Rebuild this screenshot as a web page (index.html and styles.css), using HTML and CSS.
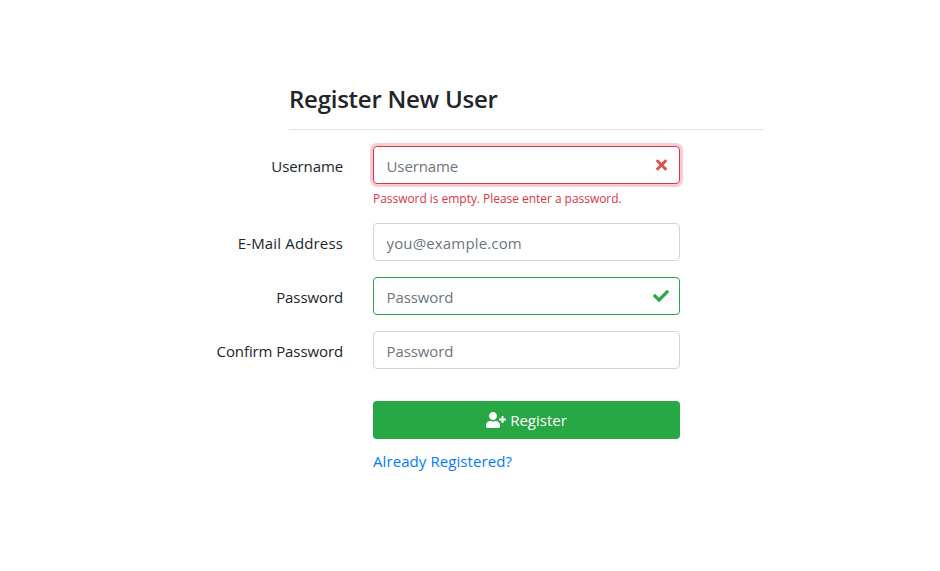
FILE: index.html
```html
<!DOCTYPE html>
<html lang="en">
<head>
    <meta charset="UTF-8">
    <meta name="viewport" content="width=device-width, initial-scale=1.0">
    <title>Register</title>
    <link rel="stylesheet" href="styles.css">
</head>
<body>

<div class="container">
    <form class="register-form">
        <h2>Register New User</h2>

        <div class="form-row has-error">
            <label for="username">Username</label>
            <div class="field">
                <div class="form-control is-invalid">
                    <input type="text" id="username" placeholder="Username">
                    <svg class="icon-times" viewBox="0 0 352 512"><path fill="currentColor" d="M242.72 256l100.07-100.07c12.28-12.28 12.28-32.19 0-44.48l-22.24-22.24c-12.28-12.28-32.19-12.28-44.48 0L176 189.28 75.93 89.21c-12.28-12.28-32.19-12.28-44.48 0L9.21 111.45c-12.28 12.28-12.28 32.19 0 44.48L109.28 256 9.21 356.07c-12.28 12.28-12.28 32.19 0 44.48l22.24 22.24c12.28 12.28 32.2 12.28 44.48 0L176 322.72l100.07 100.07c12.28 12.28 32.2 12.28 44.48 0l22.24-22.24c12.28-12.28 12.28-32.19 0-44.48L242.72 256z"/></svg>
                </div>
                <div class="feedback">Password is empty. Please enter a password.</div>
            </div>
        </div>

        <div class="form-row email-row">
            <label for="email">E-Mail Address</label>
            <div class="field">
                <div class="form-control">
                    <input type="text" id="email" placeholder="you@example.com">
                </div>
            </div>
        </div>

        <div class="form-row">
            <label for="password">Password</label>
            <div class="field">
                <div class="form-control is-valid">
                    <input type="password" id="password" placeholder="Password">
                    <svg class="icon-check" viewBox="0 0 512 512"><path fill="currentColor" d="M173.898 439.404l-166.4-166.4c-9.997-9.997-9.997-26.206 0-36.204l36.203-36.204c9.997-9.998 26.207-9.998 36.204 0L192 312.69 432.095 72.596c9.997-9.997 26.207-9.997 36.204 0l36.203 36.204c9.997 9.997 9.997 26.206 0 36.204l-294.4 294.401c-9.998 9.997-26.207 9.997-36.204-.001z"/></svg>
                </div>
            </div>
        </div>

        <div class="form-row">
            <label for="confirm">Confirm Password</label>
            <div class="field">
                <div class="form-control">
                    <input type="password" id="confirm" placeholder="Password">
                </div>
            </div>
        </div>

        <div class="form-actions">
            <button type="submit" class="btn">
                <svg class="icon-user" viewBox="0 0 640 512"><path fill="currentColor" d="M624 208h-64v-64c0-8.8-7.2-16-16-16h-32c-8.8 0-16 7.2-16 16v64h-64c-8.8 0-16 7.2-16 16v32c0 8.8 7.2 16 16 16h64v64c0 8.8 7.2 16 16 16h32c8.8 0 16-7.2 16-16v-64h64c8.8 0 16-7.2 16-16v-32c0-8.8-7.2-16-16-16zm-400 48c70.7 0 128-57.3 128-128S294.7 0 224 0 96 57.3 96 128s57.3 128 128 128zm89.6 32h-16.7c-22.2 10.2-46.9 16-72.9 16s-50.6-5.8-72.9-16h-16.7C60.2 288 0 348.2 0 422.4V464c0 26.5 21.5 48 48 48h352c26.5 0 48-21.5 48-48v-41.6c0-74.2-60.2-134.4-134.4-134.4z"/></svg>
                <span>Register</span>
            </button>
            <a href="#">Already Registered?</a>
        </div>
    </form>
</div>

</body>
</html>
```
FILE: styles.css
```css
* { box-sizing: border-box; }

body {
    margin: 0;
    background-color: #fff;
    color: #212529;
    font-family: "Segoe UI", "Open Sans", "Noto Sans", sans-serif;
    font-size: 15px;
    line-height: 24px;
    letter-spacing: -0.1px;
}

.container {
    width: 564px;
    margin-left: 200px;
    padding-top: 82px;
}

h2 {
    margin: 0 0 16px 89px;
    height: 48px;
    border-bottom: 1px solid #e4e5e6;
    font-size: 24px;
    font-weight: 600;
    line-height: 34px;
    letter-spacing: -0.25px;
}

/* Form rows */
.form-row {
    display: grid;
    grid-template-columns: 143px 307px;
    column-gap: 30px;
    margin-bottom: 16px;
}

.has-error { margin-bottom: 15px; }
.email-row { letter-spacing: 0.15px; }

label {
    padding-top: 8px;
    text-align: right;
    white-space: nowrap;
}

.form-control {
    display: flex;
    align-items: center;
    height: 38px;
    padding: 0 10px 0 12.5px;
    border: 1px solid #ced4da;
    border-radius: 4px;
}

.form-control input {
    flex: 1;
    min-width: 0;
    height: 24px;
    padding: 2px 0 0;
    border: 0;
    outline: 0;
    background: none;
    font: inherit;
    letter-spacing: inherit;
}

.form-control input::placeholder { color: #6c757d; opacity: 1; }

.is-invalid {
    border-color: #dc3545;
    box-shadow: 0 0 0 3px #f8cdd1;
    color: #dc3545;
}

.is-valid { border-color: #28a745; color: #28a745; }

.icon-times { width: 11px; height: 16px; margin-right: 2.5px; color: #d9534f; }
.icon-check { width: 16px; height: 16px; }

.feedback {
    margin-top: 5px;
    color: #dc3545;
    font-size: 12px;
    line-height: 19px;
    letter-spacing: -0.04px;
    white-space: nowrap;
}

/* Button and link */
.form-actions {
    width: 307px;
    margin: 32px 0 0 173px;
}

.btn {
    display: flex;
    align-items: center;
    justify-content: center;
    gap: 4px;
    width: 100%;
    height: 38px;
    margin-bottom: 10px;
    padding: 0;
    border: 0;
    border-radius: 4px;
    background-color: #28a745;
    color: #fff;
    font: inherit;
    letter-spacing: 0;
}

.icon-user { width: 20px; height: 16px; }

a {
    color: #007bff;
    text-decoration: none;
    letter-spacing: 0.08px;
}
```
